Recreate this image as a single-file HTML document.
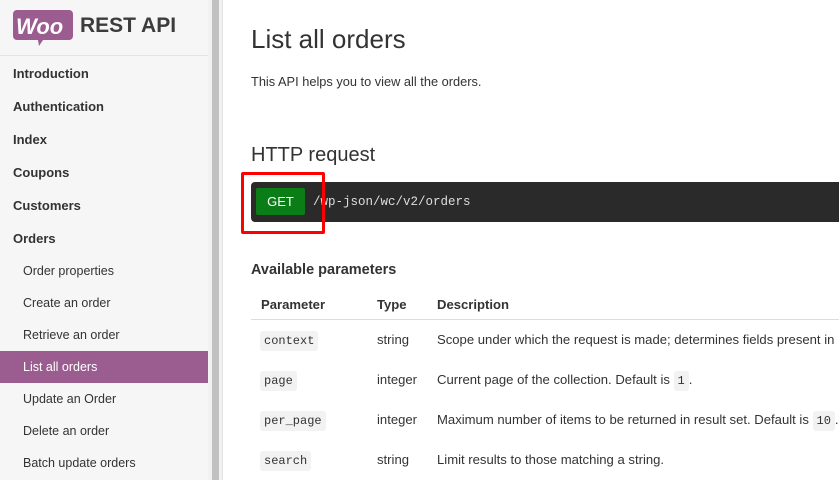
<!DOCTYPE html><html><head><style>
body{margin:0;width:839px;height:480px;overflow:hidden;background:#fff;font-family:"Liberation Sans",sans-serif;position:relative}
.sb{position:absolute;left:0;top:0;width:208px;height:480px;background:#f6f6f6}
.track{position:absolute;left:208px;top:0;width:14px;height:480px;background:#f1f1f1;border-right:1px solid #e2e2e2}
.thumb{position:absolute;left:212px;top:0;width:7px;height:480px;background:#c1c1c1}
.logo{position:absolute;left:13px;top:10px}
.sb hr{position:absolute;top:55px;left:0;width:208px;margin:0;border:0;border-top:1px solid #e4e4e4}
.it{position:absolute;left:13px;font-size:13px;font-weight:bold;color:#333}
.sub{position:absolute;left:23px;font-size:12.5px;color:#333}
.act{position:absolute;left:0;top:351px;width:208px;height:32px;background:#9b5c8f}
.m{position:absolute;left:251px;color:#333}
code{font-family:"Liberation Mono",monospace;font-size:12px;background:#f2f2f2;border-radius:3px;padding:3px 4px;color:#333}
.row{position:absolute;font-size:13.1px;color:#333}
</style></head><body>
<div class="sb">
<svg class="logo" width="60" height="36" viewBox="0 0 60 36"><path d="M4 0h52a4 4 0 0 1 4 4v22a4 4 0 0 1-4 4H30l-4 6-1-6H4a4 4 0 0 1-4-4V4a4 4 0 0 1 4-4z" fill="#9b5c8f"/><text x="3" y="24" font-family="Liberation Sans" font-weight="bold" font-style="italic" font-size="22" fill="#fff">Woo</text></svg>
<div style="position:absolute;left:80px;top:14px;font-size:21px;font-weight:bold;color:#3c3c3c">REST API</div>
<hr>
<div class="it" style="top:66px">Introduction</div>
<div class="it" style="top:99px">Authentication</div>
<div class="it" style="top:132px">Index</div>
<div class="it" style="top:165px">Coupons</div>
<div class="it" style="top:198px">Customers</div>
<div class="it" style="top:231px">Orders</div>
<div class="sub" style="top:264px">Order properties</div>
<div class="sub" style="top:296px">Create an order</div>
<div class="sub" style="top:328px">Retrieve an order</div>
<div class="act"></div>
<div class="sub" style="top:360px;color:#fff">List all orders</div>
<div class="sub" style="top:392px">Update an Order</div>
<div class="sub" style="top:424px">Delete an order</div>
<div class="sub" style="top:456px">Batch update orders</div>
</div>
<div class="track"></div><div class="thumb"></div>
<div class="m" style="top:24px;font-size:26px">List all orders</div>
<div class="m" style="top:74px;font-size:12.8px">This API helps you to view all the orders.</div>
<div class="m" style="top:144px;font-size:20px">HTTP request</div>
<div style="position:absolute;left:251px;top:182px;width:600px;height:40px;background:#2a2a2a;border-radius:4px"></div>
<div style="position:absolute;left:256px;top:188px;width:49px;height:27px;background:#0b7d17;border-radius:2px;color:#fff;font-size:13px;text-align:center;line-height:27px">GET</div>
<div style="position:absolute;left:313px;top:195px;font-family:'Liberation Mono',monospace;font-size:12.5px;color:#ddd">/wp-json/wc/v2/orders</div>
<div style="position:absolute;left:241px;top:172px;width:78px;height:56px;border:3px solid #f00;border-radius:2px"></div>
<div class="m" style="top:262px;font-size:14.5px;font-weight:bold">Available parameters</div>
<div class="row" style="left:261px;top:297px;font-weight:bold">Parameter</div>
<div class="row" style="left:377px;top:297px;font-weight:bold">Type</div>
<div class="row" style="left:437px;top:297px;font-weight:bold">Description</div>
<div style="position:absolute;left:251px;top:319px;width:600px;border-top:1px solid #ddd"></div>
<div class="row" style="left:260px;top:332px"><code>context</code></div><div class="row" style="left:377px;top:332px">string</div><div class="row" style="left:437px;top:332px;white-space:nowrap">Scope under which the request is made; determines fields present in</div>
<div class="row" style="left:260px;top:372px"><code>page</code></div><div class="row" style="left:377px;top:372px">integer</div><div class="row" style="left:437px;top:372px">Current page of the collection. Default is <code>1</code>.</div>
<div class="row" style="left:260px;top:412px"><code>per_page</code></div><div class="row" style="left:377px;top:412px">integer</div><div class="row" style="left:437px;top:412px;white-space:nowrap">Maximum number of items to be returned in result set. Default is <code>10</code>.</div>
<div class="row" style="left:260px;top:452px"><code>search</code></div><div class="row" style="left:377px;top:452px">string</div><div class="row" style="left:437px;top:452px">Limit results to those matching a string.</div>
</body></html>
